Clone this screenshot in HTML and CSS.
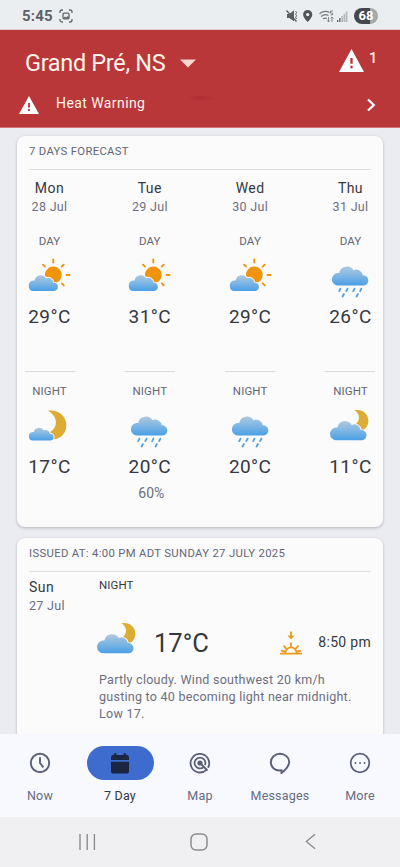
FILE: index.html
```html
<!DOCTYPE html>
<html lang="en">
<head>
<meta charset="utf-8">
<meta name="viewport" content="width=device-width, initial-scale=1">
<title>7 Day Forecast</title>
<link rel="stylesheet" href="styles.css">
</head>
<body>
<svg class="defs" width="0" height="0" aria-hidden="true">
  <defs>
    <linearGradient id="sky" x1="0" y1="0" x2="0" y2="1">
      <stop offset="0" stop-color="#afc8dc"/><stop offset=".45" stop-color="#82b8e4"/><stop offset="1" stop-color="#4a9fe6"/>
    </linearGradient>
    <path id="cloud" d="M6.5 21a6.4 6.4 0 0 1-.4-12.7H8A7.8 7.8 0 0 1 22.3 5.6A6.6 6.6 0 0 1 31.5 10.8A5.1 5.1 0 0 1 32.5 21Z"/>
    <symbol id="sun-cloud" viewBox="0 0 48 48">
      <circle cx="28.3" cy="23" r="8.4" fill="#f0940c"/>
      <path d="M28.3 7.4v3M41.6 23h3M18 12.7l2 2M38.7 12.7l-2 2M38.8 33.4l-2-2" stroke="#f0940c" stroke-width="1.9" stroke-linecap="round"/>
      <g transform="translate(3.2 21.6) scale(.8 .83)"><use href="#cloud" fill="#fbfbfb" stroke="#fbfbfb" stroke-width="2.2"/><use href="#cloud" fill="url(#sky)"/></g>
    </symbol>
    <symbol id="rain" viewBox="0 0 48 48">
      <use href="#cloud" x="5.2" y="12.6" fill="url(#sky)"/>
      <path d="M14.5 36.6l-1.3 2.5M21.6 36.6l-1.3 2.5M28.5 36.6l-1.3 2.5M35.4 36.6l-1.3 2.5M17.9 42l-1.3 2.5M31.9 42l-1.3 2.5" stroke="#559fdb" stroke-width="1.8" stroke-linecap="round"/>
    </symbol>
    <symbol id="moon" viewBox="0 0 48 48">
      <path d="M23 8.8C33 7 41.4 14 41.4 23.2C41.4 30.5 36 37 28.5 37.3L25 30C33 26 33.5 14.500 23 8.800Z" fill="#dcac34"/>
      <g transform="translate(3.4 24.600) scale(.68 .66)"><use href="#cloud" fill="#fbfbfb" stroke="#fbfbfb" stroke-width="2.6"/><use href="#cloud" fill="url(#sky)"/></g>
    </symbol>
    <symbol id="moon-cloud" viewBox="0 0 48 48">
      <path d="M28.300 8.300C36 6.500 42.400 11.800 42.400 18.800C42.400 23 40 27 35.500 29L30 22C34.500 18 34 11.500 28.300 8.300Z" fill="#dcac34"/>
      <use href="#cloud" x="3.4" y="17.300" fill="#fbfbfb" stroke="#fbfbfb" stroke-width="1.8"/><use href="#cloud" x="3.4" y="17.300" fill="url(#sky)"/>
    </symbol>
    <symbol id="warning" viewBox="0 0 24 22">
      <path fill-rule="evenodd" d="M12 0L24 22H0ZM10.900 8.500v5.500h2.200V8.500ZM10.900 16v2.300h2.200V16Z" fill="#fff"/>
    </symbol>
  </defs>
</svg>

<div class="screen">
  <div class="status">
    <span class="clock">5:45</span>
    <svg class="shot" width="14" height="14" viewBox="0 0 14 14" fill="none" stroke="#63676a" stroke-width="1.300"><path d="M1 4V3a2 2 0 0 1 2-2h1M10 1h1a2 2 0 0 1 2 2v1M13 10v1a2 2 0 0 1-2 2h-1M4 13H3a2 2 0 0 1-2-2v-1"/><rect x="4" y="4.200" width="6" height="5.600" rx="1"/><path d="M4 9.500l2-2 1.300 1L8.500 7 10 8.500v1.300H4Z" fill="#63676a" stroke="none"/></svg>
    <svg class="signals" width="64" height="16" viewBox="0 0 64 16">
      <path d="M1 6h2.300L8 2.300v11L3.300 10H1Z" fill="#5b5f62"/><path d="M.5 2.500l10 11" stroke="#5b5f62" stroke-width="1.300"/><path d="M9.600 3l1 1.600-1 1.600 1 1.600-1 1.600 1 1.600" stroke="#5b5f62" fill="none"/>
      <path fill-rule="evenodd" d="M21.700 2a4.600 4.600 0 0 0-4.600 4.600C17.100 10 21.700 14 21.700 14s4.600-4 4.600-7.400A4.600 4.600 0 0 0 21.700 2Zm0 2.900a1.700 1.700 0 1 1 0 3.400 1.700 1.700 0 0 1 0-3.400Z" fill="#505457"/>
      <g fill="none" stroke="#777b7e" stroke-width="1.200"><path d="M33.500 5.800Q38.500 1.800 43.500 4.600M35 8.500q4-3 7.500-1M37 11q2-1.500 4-.5"/><path d="M47 3h-2.500v2Q47 4.500 47 6q0 1.300-2.500.8" stroke-width=".9"/><path d="M42.500 9v5m-1.300-1.500 1.300 1.500 1.300-1.500M46 14V9m-1.300 1.500L46 9l1.300 1.500" stroke-width=".9"/></g>
      <path d="M51 12h1.300v2H51ZM53.200 10h1.300v4h-1.300Z" fill="#5b5f62"/><path d="M55.300 8h1.700v6h-1.700ZM57.500 6h1.700v8h-1.700ZM59.700 3.500h1.700V14h-1.700Z" fill="#b7babd"/>
    </svg>
    <span class="battery">68</span>
  </div>

  <header class="header">
    <div class="place">
      <h1>Grand Pré, NS</h1>
      <svg class="drop" width="16" height="9" viewBox="0 0 16 9"><path d="M0 .5h16L8 8.500Z" fill="#f8d6d1"/></svg>
      <svg class="alert" width="25" height="23" viewBox="0 0 24 22" preserveAspectRatio="none"><use href="#warning" width="24" height="22"/></svg>
      <span class="count">1</span>
    </div>
    <div class="notice">
      <svg width="20" height="18" viewBox="0 0 24 22" preserveAspectRatio="none"><use href="#warning" width="24" height="22"/></svg>
      <span>Heat Warning</span>
      <svg class="go" width="10" height="14" viewBox="0 0 10 14"><path d="M2 1.500l5.800 5.500L2 12.500" fill="none" stroke="#fff" stroke-width="2.200"/></svg>
    </div>
  </header>

  <main class="content">
    <section class="card week">
      <h2>7 DAYS FORECAST</h2>
      <div class="days">
        <div class="day">
          <b>Mon</b><i>28 Jul</i>
          <div class="half"><small>DAY</small><svg class="wx"><use href="#sun-cloud"/></svg><strong>29°C</strong></div>
          <div class="half night"><small>NIGHT</small><svg class="wx"><use href="#moon"/></svg><strong>17°C</strong></div>
        </div>
        <div class="day">
          <b>Tue</b><i>29 Jul</i>
          <div class="half"><small>DAY</small><svg class="wx"><use href="#sun-cloud"/></svg><strong>31°C</strong></div>
          <div class="half night"><small>NIGHT</small><svg class="wx"><use href="#rain"/></svg><strong>20°C</strong><em>60%</em></div>
        </div>
        <div class="day">
          <b>Wed</b><i>30 Jul</i>
          <div class="half"><small>DAY</small><svg class="wx"><use href="#sun-cloud"/></svg><strong>29°C</strong></div>
          <div class="half night"><small>NIGHT</small><svg class="wx"><use href="#rain"/></svg><strong>20°C</strong></div>
        </div>
        <div class="day">
          <b>Thu</b><i>31 Jul</i>
          <div class="half"><small>DAY</small><svg class="wx"><use href="#rain"/></svg><strong>26°C</strong></div>
          <div class="half night"><small>NIGHT</small><svg class="wx"><use href="#moon-cloud"/></svg><strong>11°C</strong></div>
        </div>
      </div>
    </section>

    <section class="card detail">
      <h2>ISSUED AT: 4:00 PM ADT SUNDAY 27 JULY 2025</h2>
      <div class="entry">
        <div class="date"><b>Sun</b><i>27 Jul</i></div>
        <div class="info">
          <small>NIGHT</small>
          <div class="now">
            <svg class="wx"><use href="#moon-cloud"/></svg>
            <strong>17°C</strong>
            <svg class="sunset" width="22" height="24" viewBox="0 0 22 24" fill="none" stroke="#ee9a1c" stroke-width="1.800"><path d="M0 22.700h22M5.400 22a5.600 5.600 0 0 1 11.200 0M11 11.500v5M3.500 14.500l3 3.300M18.500 14.500l-3 3.300M1 19.700l4 .8M21 19.700l-4 .8M11 .5v5"/><path d="M7.500 4.500h7L11 8.500Z" fill="#ee9a1c" stroke="none"/></svg>
            <span>8:50 pm</span>
          </div>
          <p>Partly cloudy. Wind southwest 20 km/h<br>gusting to 40 becoming light near midnight.<br>Low 17.</p>
        </div>
      </div>
    </section>
  </main>

  <nav class="tabs">
    <a><span class="ico"><svg width="22" height="22" viewBox="0 0 22 22" fill="none" stroke="#5b6078" stroke-width="1.900"><circle cx="11" cy="11" r="9.200"/><path d="M11 5.200V11l3.400 4.300"/></svg></span>Now</a>
    <a class="active"><span class="ico"><svg width="18" height="21" viewBox="0 0 18 21" fill="#1b2740"><path d="M0 7V4.200Q0 2 2.200 2H3V1.200a1.200 1.200 0 0 1 2.400 0V2h7.200v-.8a1.200 1.200 0 0 1 2.400 0V2h.8Q18 2 18 4.200V7Z"/><path d="M0 8.700h18v10q0 1.800-1.800 1.800H1.800Q0 20.500 0 18.700Z"/></svg></span>7 Day</a>
    <a><span class="ico"><svg width="22" height="22" viewBox="0 0 22 22" fill="none" stroke="#5b6078" stroke-width="1.800"><path d="M17.600 17.600A9.300 9.300 0 1 1 19 15.700"/><path d="M14.800 14.800A5.400 5.400 0 1 1 15.900 13.200"/><circle cx="11" cy="11" r="1.700" fill="#5b6078"/><path d="M11.500 11.500L18.500 18.500"/></svg></span>Map</a>
    <a><span class="ico"><svg width="22" height="22" viewBox="0 0 22 22" fill="none" stroke="#5b6078" stroke-width="1.900"><path d="M12.500 18.300C6 19.500 1.800 15 1.800 10.300C1.800 5.300 6 1.800 11 1.800S20.200 5.300 20.200 9.800C20.200 14.500 16 18.300 12.500 21Z"/></svg></span>Messages</a>
    <a><span class="ico"><svg width="22" height="22" viewBox="0 0 22 22" fill="none" stroke="#5b6078" stroke-width="1.800"><circle cx="11" cy="11" r="9.300"/><path d="M6.400 11h.1M11 11h.1M15.500 11h.1" stroke-linecap="round"/></svg></span>More</a>
  </nav>
  <div class="system">
    <svg width="17" height="16" viewBox="0 0 17 16"><path d="M1 0v16M8.200 0v16M15.400 0v16" stroke="#8c8c8e" stroke-width="1.400"/></svg>
    <svg class="home" width="18" height="18" viewBox="0 0 18 18"><rect x="1" y="1" width="16" height="16" rx="5" fill="none" stroke="#8c8c8e" stroke-width="1.500"/></svg>
    <svg width="11" height="17" viewBox="0 0 12 18"><path d="M11 1L1.500 9l9.500 8" fill="none" stroke="#8c8c8e" stroke-width="1.500"/></svg>
  </div>
</div>
</body>
</html>
```
FILE: styles.css
```css
* { box-sizing: border-box; margin: 0; padding: 0; }
body { font-family: Roboto, "Liberation Sans", sans-serif; background: #ebecf1; color: #35383f; }
svg { display: block; flex: none; }
.defs { position: absolute; }
b, i, em, strong, small, h1, h2 { font-style: normal; font-weight: 400; white-space: nowrap; }

.screen { display: flex; flex-direction: column; width: 400px; height: 867px; overflow: hidden; }

.status { flex: none; display: flex; align-items: center; height: 30px; padding: 3px 22px 0 22px; background: #ebeef1; border-bottom: 1px solid #e9c9c9; }
.clock { font-size: 15px; font-weight: 700; color: #5e6265; letter-spacing: .2px; width: 37px; }
.signals { margin-left: auto; margin-right: 4px; }
.battery { width: 24px; height: 16px; border-radius: 8px; background: linear-gradient(90deg, #45484b 68%, #a6a9ac 68%); color: #fff; font-size: 13px; font-weight: 700; line-height: 16px; text-align: center; }

.header { flex: none; height: 98px; color: #fff3ea; background: radial-gradient(ellipse 14px 3px at 201px 68px, #ae2e32, #b9363900), #b93639; border-bottom: 1px solid #cf7476; }
.place { display: flex; align-items: center; height: 57px; padding: 9px 23px 0 25px; }
.place h1 { font-size: 23.500px; line-height: 30px; width: 155px; letter-spacing: -.33px; }
.alert { margin-left: auto; margin-top: -6px; }
.count { font-size: 14.500px; font-weight: 500; margin: -9px 0 0 5px; width: 8px; }
.notice { display: flex; align-items: center; height: 34px; padding: 0 24px 0 19px; font-size: 14px; letter-spacing: .42px; }
.notice span { margin-left: 17px; margin-top: -2px; }
.notice svg { margin-top: 2px; }
.notice .go { margin-left: auto; margin-top: 1px; }

.content { flex: none; height: 606px; overflow: hidden; padding: 8px 17px 0; background: #ebecf1; }
.card { background: #fbfbfb; border-radius: 8px; box-shadow: 0 1px 3px #0000003d; padding: 0 12px; }
.card h2 { height: 34px; line-height: 32px; font-size: 11.300px; color: #656676; border-bottom: 1.500px solid #dfdfe2; }
.week { height: 391px; }
.week h2 { letter-spacing: .32px; }
.days { display: flex; justify-content: space-between; margin: 0 -4.500px 0 -4.500px; }
.day { display: flex; flex-direction: column; align-items: center; width: 50px; padding-top: 8px; }
b { font-size: 14px; line-height: 20px; letter-spacing: .45px; }
i { font-size: 12.500px; line-height: 17px; letter-spacing: .3px; color: #6d6e7f; }
small { font-size: 11.500px; letter-spacing: .1px; line-height: 16px; color: #656676; }
.half { display: flex; flex-direction: column; align-items: center; width: 50px; height: 156px; padding-top: 18px; }
.night { height: 155px; padding-top: 11px; border-top: 1.500px solid #dadadd; }
.wx { width: 48px; height: 48px; }
.half .wx { margin-top: 3px; margin-left: -1px; }
.half strong { font-size: 19px; line-height: 22px; letter-spacing: .4px; margin-top: 6px; }
.half em { font-size: 14px; line-height: 18px; color: #6d6e7f; margin: 6px 0 0 3px; letter-spacing: .1px; }

.detail { height: 300px; margin-top: 11px; border-radius: 8px 8px 0 0; }
.detail h2 { letter-spacing: .33px; }
.entry { display: flex; padding-top: 4px; }
.date { display: flex; flex-direction: column; width: 70px; padding-top: 1px; }
.date i { line-height: 18px; }
.info { flex: 1; }
.info small { display: block; line-height: 18px; color: #35383f; }
.now { display: flex; align-items: center; height: 48px; margin: 21px 0 0 -6px; }
.now strong { font-size: 25.500px; line-height: 48px; margin-left: 13px; padding-top: 7px; }
.sunset { margin: 7px 16px 0 auto; }
.now span { font-size: 14px; letter-spacing: .3px; padding-top: 6px; white-space: nowrap; }
.info p { font-size: 12.500px; line-height: 17.200px; letter-spacing: .26px; color: #6d6e7f; white-space: nowrap; margin-top: 7.500px; }

.tabs { flex: none; display: flex; height: 83px; background: #f7f9fe; }
.tabs a { display: flex; flex-direction: column; align-items: center; flex: 1; padding-top: 12px; font-size: 12.500px; line-height: 18px; color: #666b80; letter-spacing: .2px; }
.ico { display: flex; align-items: center; justify-content: center; width: 67px; height: 34px; border-radius: 17px; margin-bottom: 7px; }
.active .ico { background: #3d6bce; }
.tabs .active { color: #35383f; }

.system { flex: none; display: flex; align-items: center; justify-content: space-between; height: 50px; padding: 0 84px 1px 79px; background: #f0f0f2; }
.home { margin-right: 3px; }
```
